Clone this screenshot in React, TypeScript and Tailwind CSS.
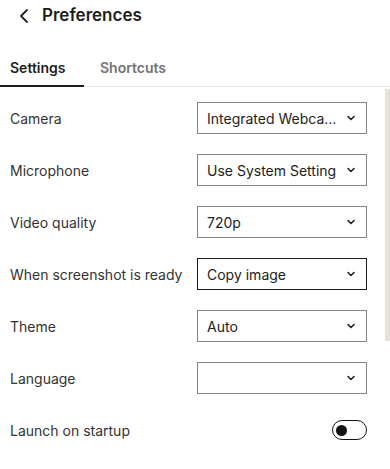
import React from "react";

const rows = [
  { label: "Camera", value: "Integrated Webca...", focused: false },
  { label: "Microphone", value: "Use System Setting", focused: false },
  { label: "Video quality", value: "720p", focused: false },
  { label: "When screenshot is ready", value: "Copy image", focused: true },
  { label: "Theme", value: "Auto", focused: false },
  { label: "Language", value: "", focused: false },
];

function Chevron() {
  return (
    <svg width="10" height="10" viewBox="0 0 10 10" fill="none">
      <path d="M2 3.5L5 6.5L8 3.5" stroke="#222" strokeWidth="1.6" strokeLinecap="round" strokeLinejoin="round" />
    </svg>
  );
}

export default function App() {
  return (
    <div className="w-[390px] h-[469px] bg-white overflow-hidden text-[#2b2b2b] font-['Inter',sans-serif]">
      {/* Header */}
      <div className="flex items-center h-[32px] pl-[19px] gap-[13px]">
        <svg width="10" height="16" viewBox="0 0 10 16" fill="none">
          <path d="M8 2L2 8L8 14" stroke="#222" strokeWidth="1.8" strokeLinecap="round" strokeLinejoin="round" />
        </svg>
        <span className="text-[17px] font-semibold text-[#1e1e1e]">Preferences</span>
      </div>

      {/* Tabs */}
      <div className="flex mt-[25px] border-b border-[#e6e6e6]">
        <div className="w-[84px] pl-[10px] pb-[7px] border-b-2 border-[#1e1e1e] -mb-px text-[14px] font-semibold text-[#1e1e1e]">
          Settings
        </div>
        <div className="pl-[16px] text-[14px] font-semibold text-[#737373]">Shortcuts</div>
      </div>

      <div className="flex">
        <div className="flex-1 pl-[10px] pr-[18px] pt-[15px]">
          {rows.map((r) => (
            <div key={r.label} className="flex items-center justify-between h-[32px] mb-[20px]">
              <span className="text-[14px] text-[#333]">{r.label}</span>
              <div
                className={`w-[170px] h-[32px] flex items-center justify-between pl-[9px] pr-[10px] border ${
                  r.focused ? "border-[#1a1a1a]" : "border-[#858585]"
                }`}
              >
                <span className="text-[14px] text-[#222] whitespace-nowrap">{r.value}</span>
                <Chevron />
              </div>
            </div>
          ))}
          <div className="flex items-center justify-between h-[32px]">
            <span className="text-[14px] text-[#333]">Launch on startup</span>
            <div className="w-[35px] h-[20px] rounded-full border-[1.5px] border-[#111] flex items-center pl-[3px]">
              <div className="w-[11px] h-[11px] rounded-full bg-[#111]" />
            </div>
          </div>
        </div>
        <div className="w-[5px] pt-[2px]">
          <div className="h-[252px] bg-[#e6e2da]" />
        </div>
      </div>
    </div>
  );
}
